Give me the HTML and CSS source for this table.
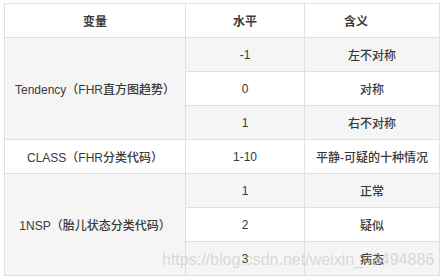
FILE: index.html
```html
<!DOCTYPE html>
<html>
<head>
    <meta charset="UTF-8">
    <title>变量说明</title>
    <link rel="stylesheet" href="styles.css">
</head>
<body>
<div class="wrap">
    <table class="vars">
        <thead>
        <tr><th class="c1">变量</th><th class="c2">水平</th><th class="c3">含义</th></tr>
        </thead>
        <tbody>
        <tr class="odd"><td rowspan="3">Tendency（FHR直方图趋势）</td><td>-1</td><td>左不对称</td></tr>
        <tr class="even"><td>0</td><td>对称</td></tr>
        <tr class="odd"><td>1</td><td>右不对称</td></tr>
        <tr class="even"><td>CLASS（FHR分类代码）</td><td>1-10</td><td>平静-可疑的十种情况</td></tr>
        <tr class="odd"><td rowspan="3">1NSP（胎儿状态分类代码）</td><td>1</td><td>正常</td></tr>
        <tr class="even"><td>2</td><td>疑似</td></tr>
        <tr class="odd"><td>3</td><td>病态</td></tr>
        </tbody>
    </table>
    <div class="mark">https://blog.csdn.net/weixin_43494886</div>
</div>
</body>
</html>
```

FILE: styles.css
```css
html,body{margin: 0; padding: 0; background: #fff;}
body{font: 12px "Liberation Sans", Arial, "Noto Sans CJK SC", sans-serif; color: #3a3a3a;}
.wrap{position: relative; width: 442px; height: 278px; padding: 3px 0 0 4px; box-sizing: border-box;}
.vars{border-collapse: collapse; width: 432px; table-layout: fixed; border: 1px solid #e0e0e0;}
.vars th,.vars td{border: 1px solid #e0e0e0; text-align: center; padding: 0; height: 33px;}
.vars th{font-weight: 700; height: 33px;}
.vars td{font-weight: 500;}
.vars .c1{width: 180px;}
.vars .c2{width: 118px;}
.vars .c3{width: 102px; padding-right: 32px;}
.vars .odd td{background: #f5f5f5;}
.vars .even td{background: #fff;}
.mark{position: absolute; left: 162px; top: 251px; font: 16px "Liberation Sans", Arial, sans-serif;
    color: rgba(190,190,190,0.55); white-space: nowrap;}
```
